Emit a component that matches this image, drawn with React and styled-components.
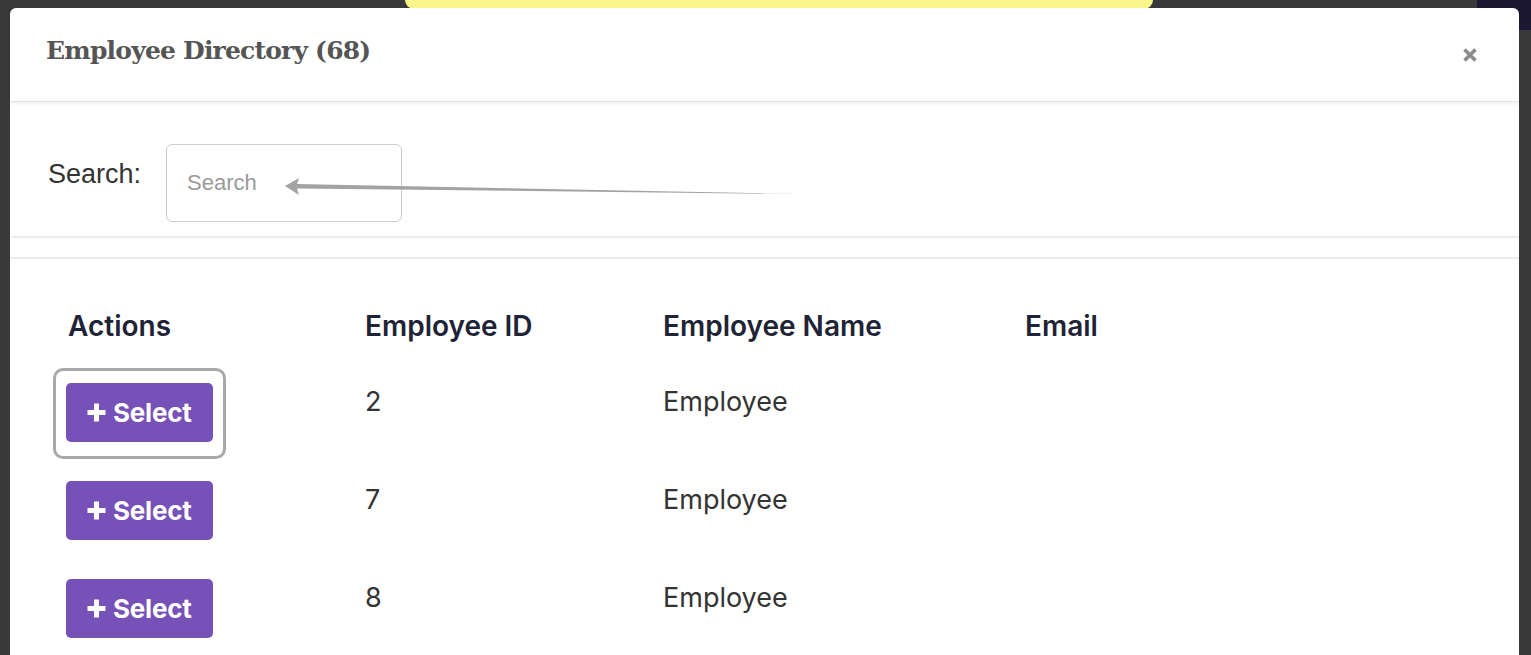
import React from 'react'
import styled, { createGlobalStyle } from 'styled-components'

const GlobalStyle = createGlobalStyle`
  html, body {
    margin: 0;
    padding: 0;
    height: 100%;
    overflow: hidden;
    background: #3a3a3a;
  }
  * { box-sizing: border-box; }
`

const Page = styled.div`
  position: relative;
  width: 100%;
  height: 100vh;
  background: #393939;
  overflow: hidden;
`

const BehindBar = styled.div`
  display: flex;
  justify-content: space-between;
  align-items: flex-start;
  height: 40px;
  padding-left: 405px;
`

const Banner = styled.div`
  width: 748px;
  height: 9px;
  background: #fbf68c;
  border-radius: 0 0 14px 14px;
`

const NavyCorner = styled.div`
  width: 54px;
  height: 30px;
  background: #1c1733;
  border-bottom-left-radius: 10px;
`

const Modal = styled.div`
  position: absolute;
  top: 8px;
  left: 10px;
  right: 12px;
  height: 700px;
  background: #fff;
  border-radius: 6px 6px 0 0;
  font-family: Inter, "Noto Sans", sans-serif;
`

const Header = styled.div`
  display: flex;
  align-items: center;
  justify-content: space-between;
  height: 94px;
  padding: 0 41px 0 36px;
  border-bottom: 1px solid #e2e4e8;
  box-shadow: 0 2px 3px rgba(0, 0, 0, 0.06);
`

const Title = styled.h4`
  margin: 0 0 8px;
  font-family: "DejaVu Serif", "Liberation Serif", serif;
  font-weight: 700;
  font-size: 25px;
  letter-spacing: -0.8px;
  color: #555;
`

const CloseButton = styled.button`
  border: none;
  background: none;
  padding: 0;
  display: flex;
  cursor: pointer;
`

const SearchBar = styled.div`
  position: relative;
  display: flex;
  align-items: flex-start;
  gap: 25px;
  height: 136px;
  padding: 42px 0 0 36px;
  border-bottom: 2px solid #ececec;
  margin-left: 2px;
`

const SearchLabel = styled.label`
  margin-top: 15px;
  font-family: "Liberation Sans", Arial, sans-serif;
  font-size: 27px;
  color: #333;
`

const SearchInput = styled.input`
  width: 236px;
  height: 78px;
  padding: 0 20px;
  border: 1.5px solid #cfcfcf;
  border-radius: 6px;
  font-family: "Liberation Sans", Arial, sans-serif;
  font-size: 22px;
  outline: none;
  &::placeholder { color: #9a9a9a; }
`

const Arrow = styled.svg`
  position: absolute;
  left: 272px;
  top: 70px;
  pointer-events: none;
`

const TableSection = styled.div`
  margin-top: 19px;
  border-top: 2px solid #ececec;
  padding: 50px 0 0 58px;
`

const Grid = styled.div`
  display: grid;
  grid-template-columns: 297px 298px 362px 1fr;
  align-items: start;
`

const HeadCell = styled.div`
  font-size: 28px;
  font-weight: 600;
  line-height: 34px;
  color: #1f2336;
  padding-bottom: 20px;
`

const Cell = styled.div`
  padding: ${p => (p.$button ? '20px 0 19px' : '20px 0 0')};
  font-size: 27px;
  line-height: 38px;
  color: #333;
  margin-left: ${p => (p.$button ? '-2px' : '0')};
`

const FocusRing = styled.div`
  display: inline-block;
  margin: -15px -13px -17px;
  padding: 12px 10px 14px;
  border: 3px solid #a9a9a9;
  border-radius: 10px;
`

const SelectButton = styled.button`
  display: flex;
  align-items: center;
  gap: 6px;
  width: 147px;
  height: 59px;
  padding: 0 0 0 20px;
  border: none;
  border-radius: 5px;
  background: #7651b7;
  color: #fff;
  font-family: Inter, sans-serif;
  font-size: 26px;
  font-weight: 700;
  letter-spacing: -0.2px;
  cursor: pointer;
  outline: none;
`

const PlusIcon = () => (
  <svg width="21" height="21" viewBox="0 0 21 21">
    <path d="M10.5 1.5v18M1.5 10.5h18" stroke="#fff" strokeWidth="5" />
  </svg>
)

const rows = [
  { id: 2, name: 'Employee', email: '' },
  { id: 7, name: 'Employee', email: '' },
  { id: 8, name: 'Employee', email: '' },
]

function Select() {
  return (
    <SelectButton>
      <PlusIcon />
      Select
    </SelectButton>
  )
}

export default function App() {
  return (
    <>
      <GlobalStyle />
      <Page>
        <BehindBar>
          <Banner />
          <NavyCorner />
        </BehindBar>
        <Modal>
          <Header>
            <Title>Employee Directory (68)</Title>
            <CloseButton aria-label="Close">
              <svg width="16" height="16" viewBox="0 0 16 16">
                <path d="M2.5 2.5l11 11M13.5 2.5l-11 11" stroke="#8a8a8a" strokeWidth="3.6" />
              </svg>
            </CloseButton>
          </Header>
          <SearchBar>
            <SearchLabel>Search:</SearchLabel>
            <SearchInput placeholder="Search" />
            <Arrow width="520" height="30" viewBox="0 0 520 30">
              <polygon points="1,14 15,6 13,12 514,22 13,16.5 15,23" fill="#a3a3a3" />
            </Arrow>
          </SearchBar>
          <TableSection>
            <Grid>
              <HeadCell>Actions</HeadCell>
              <HeadCell>Employee ID</HeadCell>
              <HeadCell>Employee Name</HeadCell>
              <HeadCell>Email</HeadCell>
              {rows.map((r, i) => (
                <React.Fragment key={r.id}>
                  <Cell $button>
                    {i === 0 ? (
                      <FocusRing>
                        <Select />
                      </FocusRing>
                    ) : (
                      <Select />
                    )}
                  </Cell>
                  <Cell>{r.id}</Cell>
                  <Cell>{r.name}</Cell>
                  <Cell>{r.email}</Cell>
                </React.Fragment>
              ))}
            </Grid>
          </TableSection>
        </Modal>
      </Page>
    </>
  )
}
